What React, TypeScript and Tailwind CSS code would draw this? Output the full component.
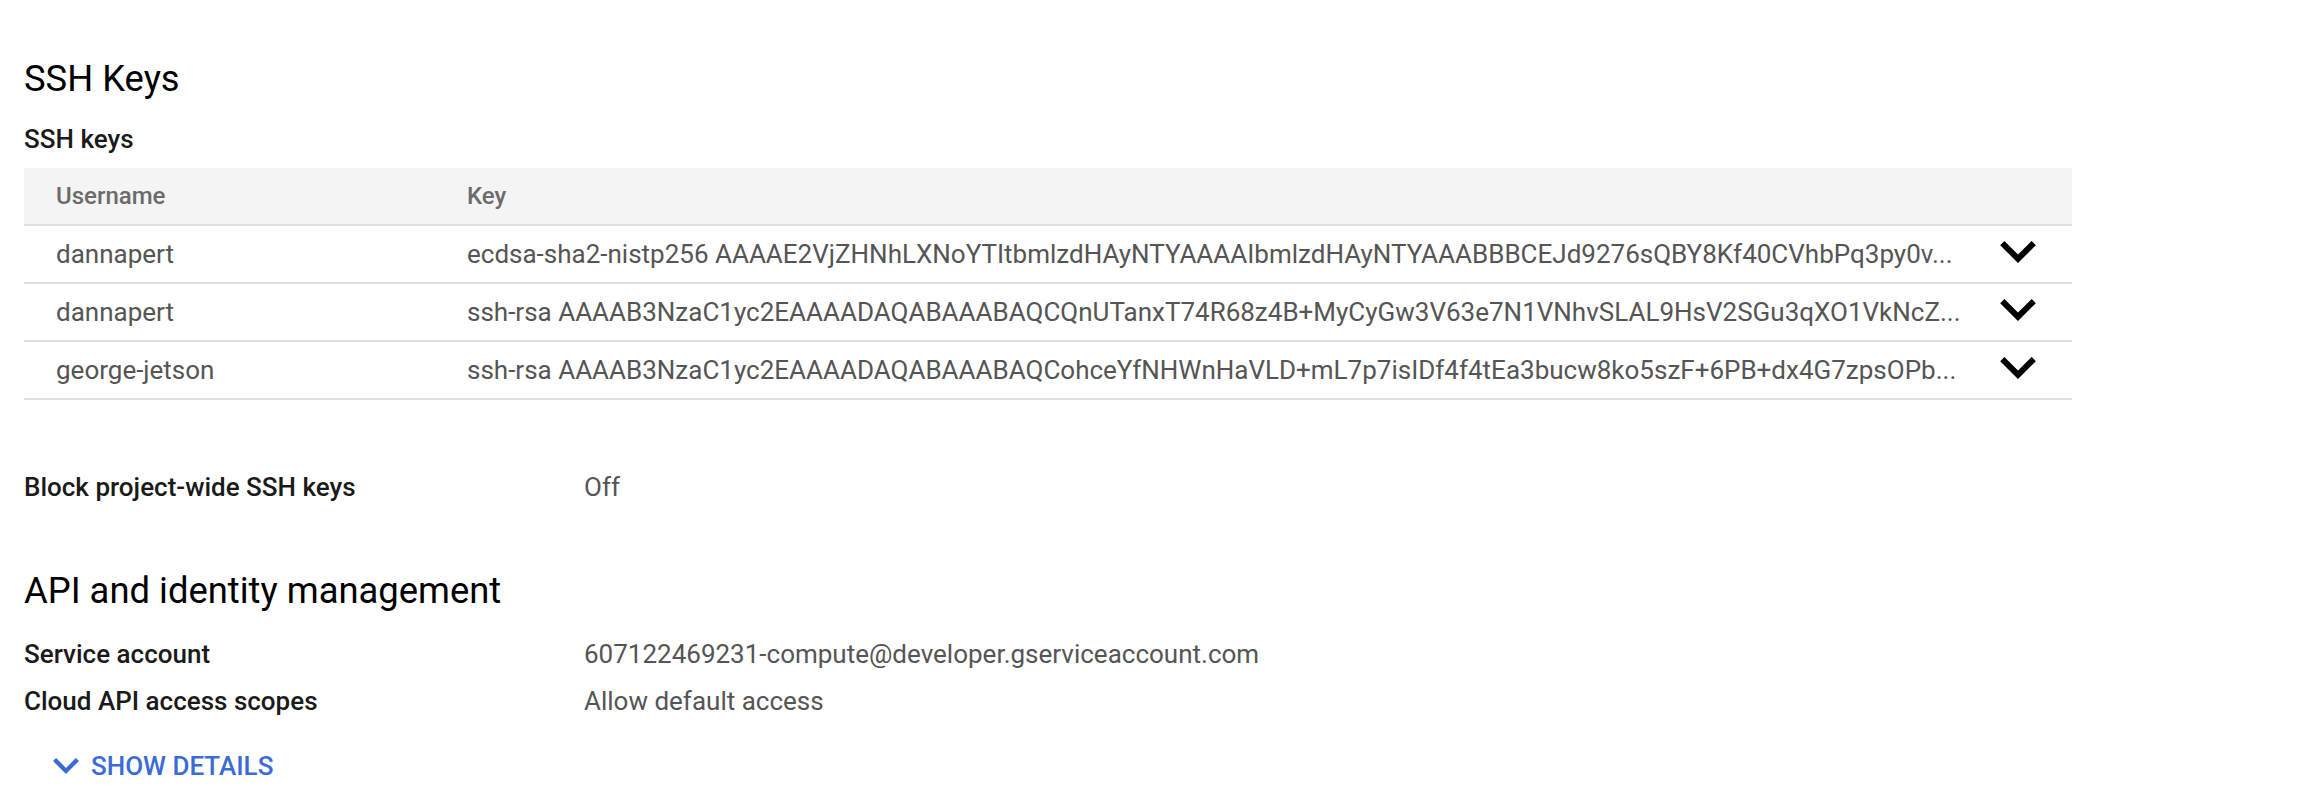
import React from 'react'

const keys = [
  {
    user: 'dannapert',
    key: 'ecdsa-sha2-nistp256 AAAAE2VjZHNhLXNoYTItbmlzdHAyNTYAAAAIbmlzdHAyNTYAAABBBCEJd9276sQBY8Kf40CVhbPq3py0v...',
  },
  {
    user: 'dannapert',
    key: 'ssh-rsa AAAAB3NzaC1yc2EAAAADAQABAAABAQCQnUTanxT74R68z4B+MyCyGw3V63e7N1VNhvSLAL9HsV2SGu3qXO1VkNcZ...',
  },
  {
    user: 'george-jetson',
    key: 'ssh-rsa AAAAB3NzaC1yc2EAAAADAQABAAABAQCohceYfNHWnHaVLD+mL7p7isIDf4f4tEa3bucw8ko5szF+6PB+dx4G7zpsOPb...',
  },
]

function Chevron({ className }: { className: string }) {
  return (
    <svg viewBox="0 0 12 7.41" className={className} fill="currentColor">
      <path d="M10.59 0L6 4.58 1.41 0 0 1.41l6 6 6-6z" />
    </svg>
  )
}

function Field({ label, value }: { label: string; value: string }) {
  return (
    <div className="grid grid-cols-[560px_1fr] items-center h-[32px] text-[26px] leading-[32px]">
      <div className="font-medium text-[#1a1a1a]">{label}</div>
      <div className="text-[#555]">{value}</div>
    </div>
  )
}

export default function App() {
  return (
    <main className="min-h-screen bg-white px-[24px] pt-[55px] [font-family:Roboto,'Liberation_Sans',sans-serif]">
      <h1 className="text-[36.4px] leading-[48px] font-normal text-black">SSH Keys</h1>
      <h2 className="mt-[20px] text-[26px] leading-[32px] font-medium text-[#1a1a1a]">SSH keys</h2>

      <div className="mt-[13px] w-[2048px]">
        <div className="grid grid-cols-[443px_1fr_72px] h-[58px] items-center bg-[#f4f4f4] border-b-2 border-[#e0e0e0] text-[24px] font-medium text-[#6b6b6b]">
          <div className="pl-[32px]">Username</div>
          <div>Key</div>
          <div />
        </div>
        {keys.map((k, i) => (
          <div
            key={i}
            className="grid grid-cols-[443px_1fr_72px] h-[58px] items-center border-b-2 border-[#e0e0e0] text-[26px] text-[#555]"
          >
            <div className="pl-[32px]">{k.user}</div>
            <div className="truncate whitespace-nowrap pr-[32px]">{k.key}</div>
            <div className="flex items-center justify-start">
              <Chevron className="w-[36px] h-[22px] mb-[5px] text-black" />
            </div>
          </div>
        ))}
      </div>

      <div className="mt-[71px]">
        <Field label="Block project-wide SSH keys" value="Off" />
      </div>

      <h1 className="mt-[64px] text-[36.4px] leading-[48px] font-normal text-black">API and identity management</h1>

      <div className="mt-[23px] flex flex-col gap-[15px]">
        <Field label="Service account" value="607122469231-compute@developer.gserviceaccount.com" />
        <Field label="Cloud API access scopes" value="Allow default access" />
      </div>

      <button className="mt-[29px] ml-[29px] flex items-center gap-[12px] h-[40px] text-[26px] font-medium text-[#3b6bd6]">
        <Chevron className="w-[26px] h-[16px]" />
        <span>SHOW DETAILS</span>
      </button>
    </main>
  )
}
